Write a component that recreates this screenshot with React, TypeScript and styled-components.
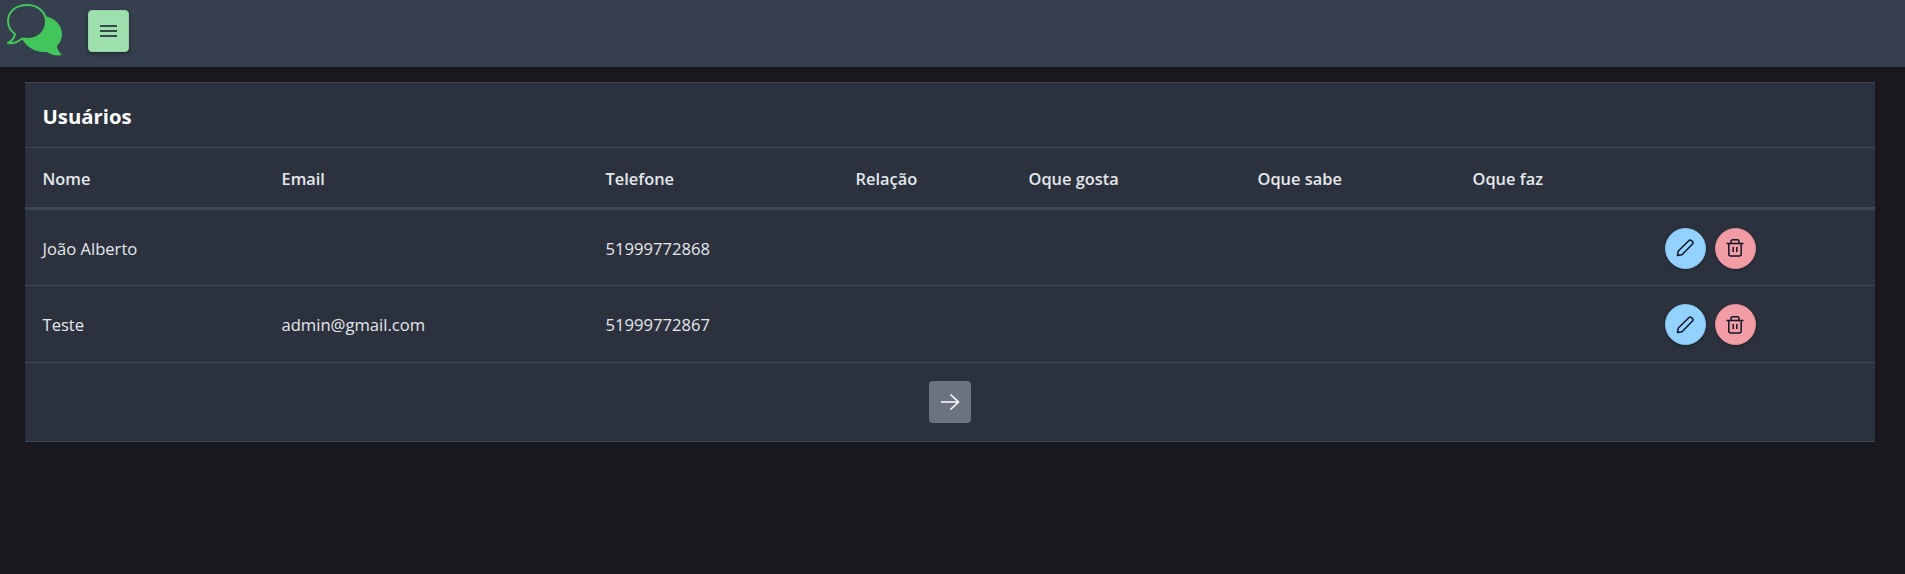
import React from 'react';
import styled, { createGlobalStyle } from 'styled-components';

const GlobalStyle = createGlobalStyle`
  html, body { margin: 0; padding: 0; height: 100%; }
  body {
    background: #18181e;
    color: #e5e7eb;
    font-family: "Open Sans", "Noto Sans", "Liberation Sans", sans-serif;
    font-size: 16px;
  }
`;

const Page = styled.div`
  min-height: 574px;
  display: flex;
  flex-direction: column;
`;

const Topbar = styled.header`
  height: 67px;
  background: #363f4e;
  display: flex;
  align-items: flex-start;
  padding: 4px 0 0 5px;
  box-sizing: border-box;
  gap: 23px;
`;

const MenuButton = styled.button`
  width: 41px;
  height: 42px;
  margin-top: 6px;
  border: 1px solid #93d3a2;
  border-radius: 4px;
  background: #9ee0ad;
  box-shadow: 0 2px 4px rgba(0, 0, 0, 0.35);
  display: flex;
  align-items: center;
  justify-content: center;
  padding: 0;
  color: #111827;
`;

const Content = styled.main`
  padding: 15px 30px 0 25px;
`;

const Card = styled.section`
  background: #2b323e;
  border-top: 1px solid #3d4856;
  border-bottom: 1px solid #3d4856;
`;

const CardTitle = styled.h2`
  margin: 0;
  height: 65px;
  display: flex;
  align-items: center;
  padding: 2px 17.5px 0;
  box-sizing: border-box;
  font-size: 20.3px;
  font-weight: 700;
  color: #fff;
  border-bottom: 1px solid #3d4856;
`;

const Table = styled.table`
  width: 100%;
  border-collapse: collapse;
  table-layout: fixed;
`;

const Col = styled.col<{ $w: number }>`
  width: ${(p) => p.$w}px;
`;

const Th = styled.th`
  height: 58px;
  padding: 1px 17.5px 0;
  text-align: left;
  font-size: 16.4px;
  font-weight: 600;
  color: #e5e7eb;
  border-bottom: 3px solid #3d4856;
`;

const Row = styled.tr`
  height: 77px;
  border-bottom: 1px solid #3d4856;
`;

const Td = styled.td`
  padding: 1px 17.5px 0;
  font-size: 16.6px;
  color: #e5e7eb;
`;

const Actions = styled.div`
  display: flex;
  gap: 9px;
`;

const RoundButton = styled.button<{ $bg: string; $ring: string }>`
  width: 41px;
  height: 41px;
  border: 1px solid ${(p) => p.$ring};
  border-radius: 50%;
  background: ${(p) => p.$bg};
  box-shadow: 0 1px 3px rgba(0, 0, 0, 0.3);
  display: flex;
  align-items: center;
  justify-content: center;
  padding: 0;
  color: #111827;
`;

const Pager = styled.div`
  height: 78px;
  display: flex;
  align-items: center;
  justify-content: center;
`;

const PagerButton = styled.button`
  width: 42px;
  height: 42px;
  border: none;
  border-radius: 4px;
  background: #6b7280;
  display: flex;
  align-items: center;
  justify-content: center;
  padding: 0;
  color: #fff;
`;

const widths = [239, 324, 250, 173, 229, 215, 192, 228];
const headers = ['Nome', 'Email', 'Telefone', 'Relação', 'Oque gosta', 'Oque sabe', 'Oque faz', ''];
const users = [
  { nome: 'João Alberto', email: '', telefone: '51999772868' },
  { nome: 'Teste', email: 'admin@gmail.com', telefone: '51999772867' },
];

function Logo() {
  return (
    <svg width="60" height="54" viewBox="0 0 60 54">
      <path d="M40 12c10 2 17 9 17 18 0 5-2 9-5 12 0 3 2 6 5 9-6 1-11 0-15-3-12 1-20-5-25-13z" fill="#42c65b" strokeLinejoin="round" />
      <path
        d="M22 1C11 1 3 7.500 3 17c0 5 2 9.500 7 13-.5 3-3 7-7 9 5 .8 10-1 14-4.500 1.500.3 3.500.5 5 .5 11 0 19-7 19-17S33 1 22 1z"
        fill="#363f4e"
        stroke="#42c65b"
        strokeWidth="2"
        strokeLinejoin="round"
      />
    </svg>
  );
}

function PencilIcon() {
  return (
    <svg width="20" height="20" viewBox="0 0 20 20" fill="none" stroke="currentColor" strokeWidth="1.500" strokeLinejoin="round">
      <path d="M2.500 17.500l.8-4.500L13.800 2.700c.8-.8 2-.8 2.800 0l.7.7c.8.8.8 2 0 2.800L7 16.700z" />
    </svg>
  );
}

function TrashIcon() {
  return (
    <svg width="20" height="20" viewBox="0 0 20 20" fill="none" stroke="currentColor" strokeWidth="1.500">
      <path d="M1.500 5.500h17M3.800 5.500v10.500c0 1.200.8 2 2 2h8.400c1.200 0 2-.8 2-2V5.500M6 5.500V3.500c0-1 .6-1.700 1.700-1.700h4.600c1.100 0 1.700.7 1.700 1.700v2M8.200 9v5M11.800 9v5" />
    </svg>
  );
}

function App() {
  return (
    <Page>
      <GlobalStyle />
      <Topbar>
        <Logo />
        <MenuButton aria-label="Menu">
          <svg width="17" height="14" viewBox="0 0 17 14" stroke="currentColor" strokeWidth="1.500">
            <path d="M0 2h17M0 7h17M0 12h17" />
          </svg>
        </MenuButton>
      </Topbar>
      <Content>
        <Card>
          <CardTitle>Usuários</CardTitle>
          <Table>
            <colgroup>
              {widths.map((w, i) => (
                <Col key={i} $w={w} />
              ))}
            </colgroup>
            <thead>
              <tr>
                {headers.map((h, i) => (
                  <Th key={i}>{h}</Th>
                ))}
              </tr>
            </thead>
            <tbody>
              {users.map((u) => (
                <Row key={u.telefone}>
                  <Td>{u.nome}</Td>
                  <Td>{u.email}</Td>
                  <Td>{u.telefone}</Td>
                  <Td />
                  <Td />
                  <Td />
                  <Td />
                  <Td>
                    <Actions>
                      <RoundButton $bg="#93d1ff" $ring="#8ac6f2" aria-label="Editar">
                        <PencilIcon />
                      </RoundButton>
                      <RoundButton $bg="#f29ca6" $ring="#e58d98" aria-label="Excluir">
                        <TrashIcon />
                      </RoundButton>
                    </Actions>
                  </Td>
                </Row>
              ))}
            </tbody>
          </Table>
          <Pager>
            <PagerButton aria-label="Próxima">
              <svg width="20" height="18" viewBox="0 0 20 18" fill="none" stroke="currentColor" strokeWidth="1.600">
                <path d="M1 9h17M10.500 1.500L18.500 9 10.500 16.500" />
              </svg>
            </PagerButton>
          </Pager>
        </Card>
      </Content>
    </Page>
  );
}

export default App;
